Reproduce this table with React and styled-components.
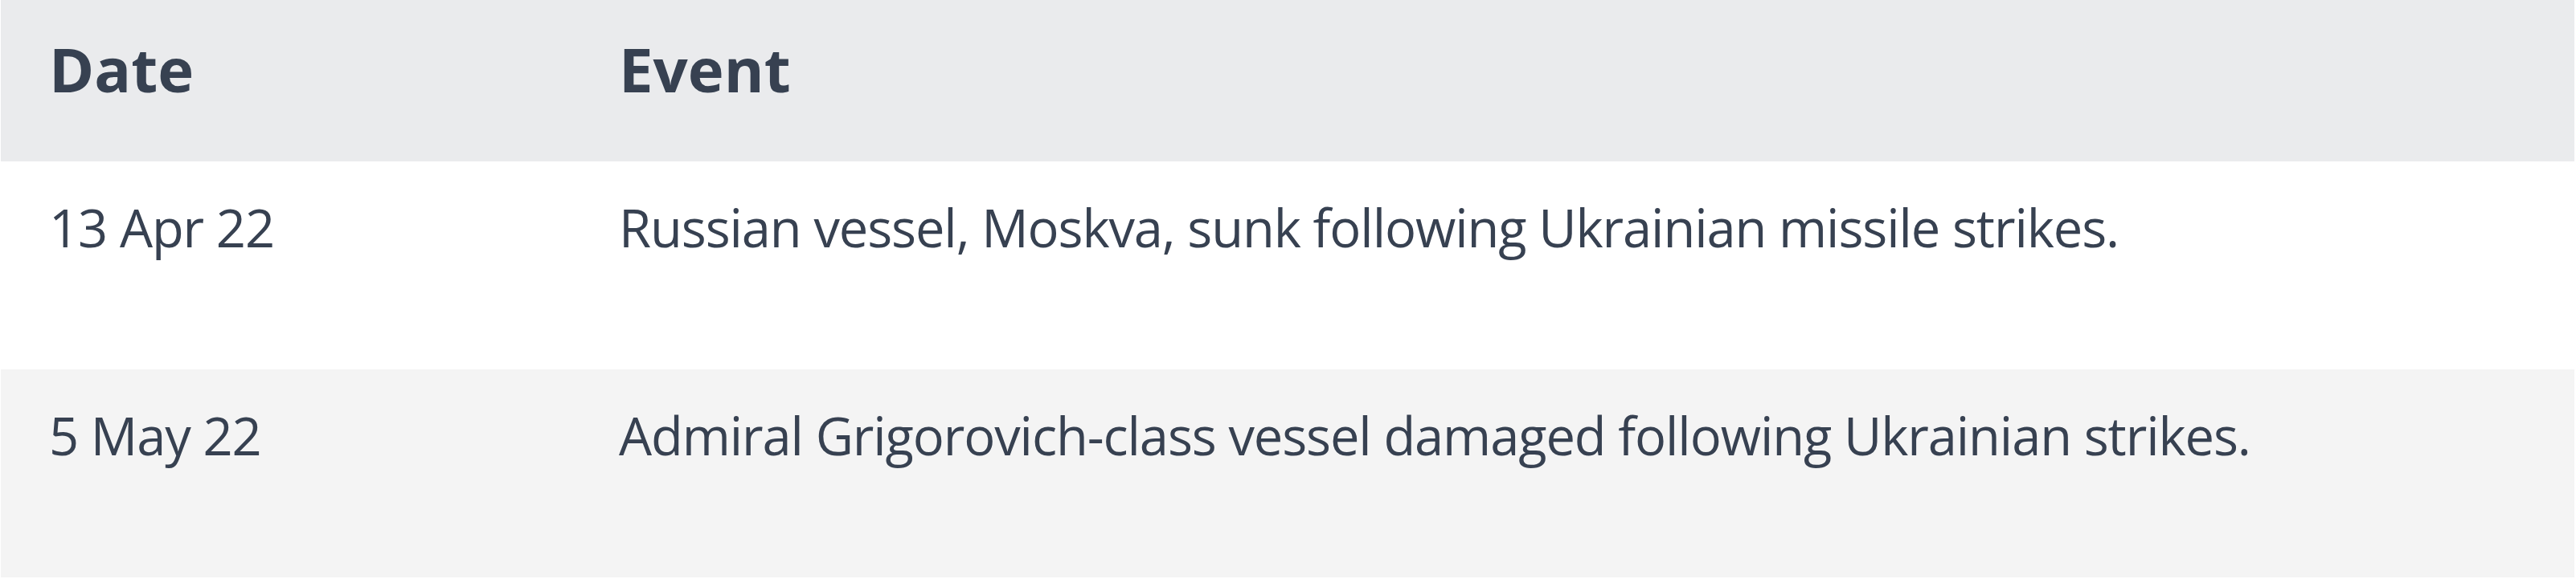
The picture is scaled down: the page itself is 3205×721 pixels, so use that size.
import React from 'react'
import styled, { createGlobalStyle } from 'styled-components'

const GlobalStyle = createGlobalStyle`
    body {
        margin: 0;
        background: #ffffff;
        font-family: "Open Sans", "Noto Sans", sans-serif;
        color: #374151;
    }
`

const events = [
    { date: '13 Apr 22', text: 'Russian vessel, Moskva, sunk following Ukrainian missile strikes.' },
    { date: '5 May 22', text: 'Admiral Grigorovich-class vessel damaged following Ukrainian strikes.' },
]

function App() {
    return (
        <>
            <GlobalStyle />
            <Wrap>
                <Table>
                    <HeadRow>
                        <HeadCell>Date</HeadCell>
                        <HeadCell>Event</HeadCell>
                    </HeadRow>
                    {events.map((e, i) => (
                        <Row key={e.date} striped={i % 2 === 1}>
                            <Cell>{e.date}</Cell>
                            <Cell>{e.text}</Cell>
                        </Row>
                    ))}
                </Table>
            </Wrap>
        </>
    )
}

export default App

const Wrap = styled.div`
    padding: 0 2px 2px 1px;
`

const Table = styled.div`
    display: flex;
    flex-direction: column;
`

const HeadRow = styled.div`
    display: grid;
    grid-template-columns: 709px 1fr;
    height: 201px;
    box-sizing: border-box;
    background: #eaebed;
`

const HeadCell = styled.div`
    padding: 29px 60px 0;
    font-size: 76px;
    line-height: 1.5;
    font-weight: 700;
    color: #374151;
`

const Row = styled.div`
    display: grid;
    grid-template-columns: 709px 1fr;
    height: 259px;
    box-sizing: border-box;
    background: ${props => props.striped ? '#f4f4f4' : '#ffffff'};
`

const Cell = styled.div`
    padding: 34px 60px 0;
    font-size: 65px;
    line-height: 1.5;
    font-weight: 400;
    letter-spacing: -1.1px;
    color: #374151;
`
